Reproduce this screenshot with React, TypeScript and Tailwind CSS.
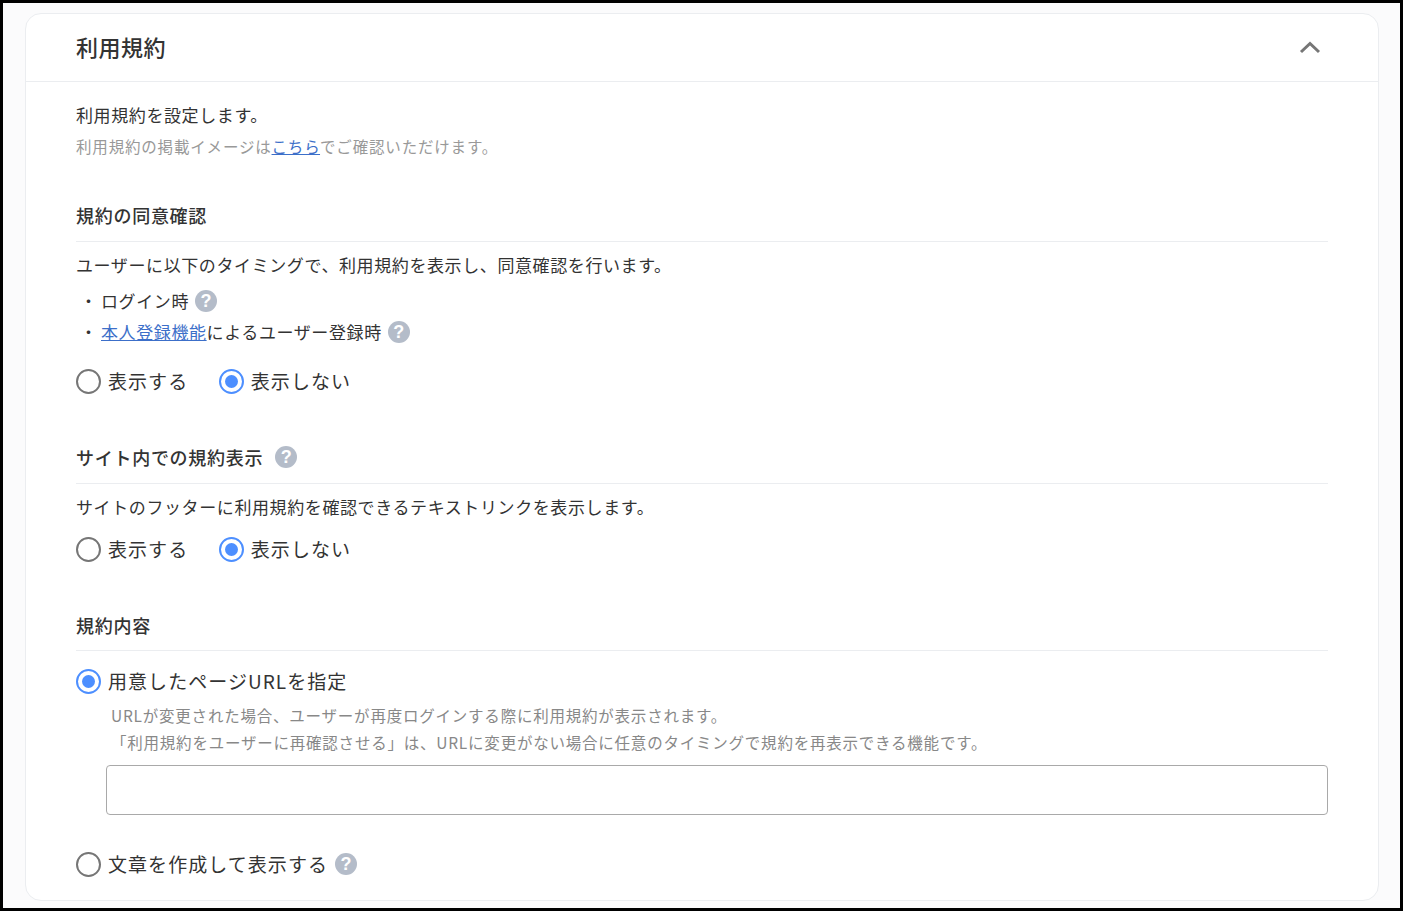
const font = { fontFamily: '"Noto Sans CJK JP", "Noto Sans", sans-serif' };

function Help({ className = "" }: { className?: string }) {
  return (
    <span className={`inline-flex h-[22px] w-[22px] shrink-0 items-center justify-center rounded-full bg-[#b4bcc9] font-['Liberation_Sans',sans-serif] text-[18px] leading-none font-bold tracking-normal text-white ${className}`}>
      ?
    </span>
  );
}

function Radio({ checked, label }: { checked?: boolean; label: string }) {
  return (
    <label className="flex items-center gap-[7px] text-[19px] leading-[28px] tracking-[1.05px] text-[#333]">
      {checked ? (
        <span className="flex h-[25px] w-[25px] shrink-0 items-center justify-center rounded-full border-[2.5px] border-[#4d8fff]">
          <span className="h-[13px] w-[13px] rounded-full bg-[#4d8fff]" />
        </span>
      ) : (
        <span className="h-[25px] w-[25px] shrink-0 rounded-full border-[2.5px] border-[#767676]" />
      )}
      {label}
    </label>
  );
}

function Heading({ children, className = "h-[40px]" }: { children: React.ReactNode; className?: string }) {
  return (
    <div className={`flex items-start gap-[12px] border-b border-[#ebedf0] text-[18px] leading-[26px] font-medium tracking-[0.04em] text-[#333] ${className}`}>
      {children}
    </div>
  );
}

export default function App() {
  return (
    <div className="h-[911px] w-[1403px] overflow-hidden bg-black p-[3px]" style={font}>
      <div className="h-[905px] bg-[#fbfbfc] pt-[10px] pr-[21px] pl-[22px]">
        <div className="h-[888px] overflow-hidden rounded-[16px] border border-[#ebedf0] bg-white">
          <div className="flex h-[68px] items-center justify-between border-b border-[#ebedf0] pr-[57px] pl-[50px]">
            <h1 className="mb-[2px] text-[22px] font-medium tracking-[0.5px] text-[#333]">利用規約</h1>
            <svg className="mb-[2px]" width="22" height="14" viewBox="0 0 22 14" fill="none" stroke="#767676" strokeWidth="3">
              <path d="M2 12l9-8.5 9 8.5" />
            </svg>
          </div>
          <div className="pr-[50px] pl-[50px]">
            <p className="mt-[19px] text-[17px] leading-[28px] tracking-[0.6px] text-[#333]">利用規約を設定します。</p>
            <p className="mt-[3px] text-[15.5px] leading-[28px] tracking-[0.82px] text-[#999]">
              利用規約の掲載イメージは<a className="text-[#3c6fc9] underline">こちら</a>でご確認いただけます。
            </p>

            <div className="mt-[42px]">
              <Heading>規約の同意確認</Heading>
              <p className="mt-[9px] text-[17px] leading-[28px] tracking-[0.6px] text-[#333]">ユーザーに以下のタイミングで、利用規約を表示し、同意確認を行います。</p>
              <ul className="mt-[6px] text-[17px] leading-[31px] tracking-[0.6px] text-[#333]">
                <li className="flex items-center">
                  <span className="w-[25px] pl-[4px]">・</span>ログイン時<Help className="ml-[6px]" />
                </li>
                <li className="flex items-center">
                  <span className="w-[25px] pl-[4px]">・</span>
                  <a className="text-[#3c6fc9] underline">本人登録機能</a>によるユーザー登録時<Help className="ml-[6px]" />
                </li>
              </ul>
              <div className="mt-[20px] flex gap-[30.6px]">
                <Radio label="表示する" />
                <Radio checked label="表示しない" />
              </div>
            </div>

            <div className="mt-[49px]">
              <Heading>
                サイト内での規約表示<Help className="mt-[2px]" />
              </Heading>
              <p className="mt-[9px] text-[17px] leading-[28px] tracking-[0.6px] text-[#333]">サイトのフッターに利用規約を確認できるテキストリンクを表示します。</p>
              <div className="mt-[14px] flex gap-[30.6px]">
                <Radio label="表示する" />
                <Radio checked label="表示しない" />
              </div>
            </div>

            <div className="mt-[49px]">
              <Heading className="h-[39px]">規約内容</Heading>
              <div className="mt-[16px]">
                <Radio checked label="用意したページURLを指定" />
              </div>
              <div className="mt-[7px] pl-[35px] text-[15.5px] leading-[27px] tracking-[0.78px] text-[#888]">
                <p>URLが変更された場合、ユーザーが再度ログインする際に利用規約が表示されます。</p>
                <p>「利用規約をユーザーに再確認させる」は、URLに変更がない場合に任意のタイミングで規約を再表示できる機能です。</p>
              </div>
              <input className="mt-[9px] ml-[30px] block h-[50px] w-[1222px] rounded-[4px] border border-[#a9a9a9] bg-white" />
              <div className="mt-[35px] flex items-center gap-[7px]">
                <Radio label="文章を作成して表示する" />
                <Help />
              </div>
            </div>
          </div>
        </div>
      </div>
    </div>
  );
}
